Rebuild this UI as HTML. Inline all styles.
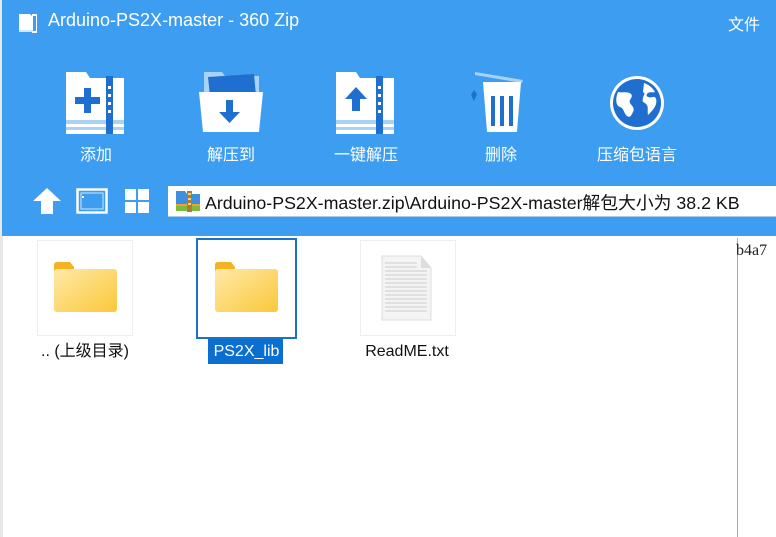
<!DOCTYPE html>
<html><head><meta charset="utf-8"><style>
*{margin:0;padding:0;box-sizing:border-box}
body{width:776px;height:537px;overflow:hidden;background:#fff;font-family:"Liberation Sans","Noto Sans CJK SC",sans-serif;position:relative}
.top{position:absolute;left:2px;top:0;width:774px;height:236px;background:#3d9df0}
.t{position:absolute;color:#fff}
.lbl{position:absolute;top:141px;font-size:16px;color:#fff;width:120px;text-align:center}
.ic{position:absolute;top:68px}
.tile{position:absolute;top:240px;width:96px;height:96px;border:1px solid #eee;background:#fff}
.fl{position:absolute;top:341px;font-size:16px;line-height:22px;color:#111;text-align:center;white-space:nowrap}
</style></head><body>
<div style="position:absolute;left:0;top:0;width:3px;height:537px;background:#e8e8e8"></div>
<div class="top"></div>
<svg class="t" style="left:18px;top:12px" width="22" height="22" viewBox="0 0 22 22"><path d="M1 2h11l3 3v15H1z" fill="#fff"/><rect x="14" y="2" width="5" height="19" fill="#fff"/><rect x="15" y="4" width="3" height="15" fill="#3d9df0"/><rect x="1" y="18" width="14" height="2" fill="#cfe6fb"/></svg>
<div class="t" style="left:48px;top:10px;font-size:18px">Arduino-PS2X-master - 360 Zip</div>
<div class="t" style="left:728px;top:11px;font-size:16px">文件</div>

<svg class="ic" style="left:65px" width="62" height="66" viewBox="0 0 62 66"><path d="M1 4h20l4 6h34v56H1z" fill="#fff"/><rect x="1" y="52" width="58" height="4" fill="#a9d2f7"/><rect x="1" y="59" width="58" height="3" fill="#a9d2f7"/><rect x="41" y="8" width="7" height="58" fill="#1f6fd0"/><g fill="#fff"><rect x="43" y="18" width="3" height="3"/><rect x="43" y="26" width="3" height="3"/><rect x="43" y="34" width="3" height="3"/><rect x="43" y="42" width="3" height="3"/></g><rect x="10" y="29" width="25" height="7" fill="#1f6fd0"/><rect x="19" y="20" width="7" height="25" fill="#1f6fd0"/></svg>
<svg class="ic" style="left:198px" width="66" height="66" viewBox="0 0 66 66"><path d="M6 4h18l3 4h34v20H6z" fill="#a9d2f7"/><path d="M10 9l46-3 2 22H12z" fill="#1f6fd0"/><path d="M1 24h64l-4 40H5z" fill="#fff"/><path d="M28 32h7v12h7l-10.5 11L21 44h7z" fill="#1f6fd0"/></svg>
<svg class="ic" style="left:335px" width="62" height="66" viewBox="0 0 62 66"><path d="M1 4h20l4 6h34v56H1z" fill="#fff"/><rect x="1" y="52" width="58" height="4" fill="#a9d2f7"/><rect x="1" y="59" width="58" height="3" fill="#a9d2f7"/><rect x="41" y="8" width="7" height="58" fill="#1f6fd0"/><g fill="#fff"><rect x="43" y="18" width="3" height="3"/><rect x="43" y="26" width="3" height="3"/><rect x="43" y="34" width="3" height="3"/><rect x="43" y="42" width="3" height="3"/></g><path d="M21 19l11 12h-7v12h-8V31h-7z" fill="#1f6fd0"/></svg>
<svg class="ic" style="left:467px" width="62" height="66" viewBox="0 0 62 66"><path d="M8 4l48 8-1 3-47-8z" fill="#a9d2f7"/><path d="M16 14h38l-4 50H20z" fill="#fff"/><rect x="24" y="28" width="4" height="30" fill="#1f6fd0"/><rect x="33" y="28" width="4" height="30" fill="#1f6fd0"/><rect x="42" y="28" width="4" height="30" fill="#1f6fd0"/><path d="M7 22l3 4-3 7-3-6z" fill="#1f6fd0"/></svg>
<svg class="ic" style="left:608px;top:74px" width="58" height="58" viewBox="0 0 58 58"><circle cx="29" cy="29" r="27" fill="#fff"/><circle cx="29" cy="29" r="24" fill="#1f6fd0"/><path d="M10 18c5 1 10-1 13 2s-3 6-1 9 5 5 3 9-3 6-6 4-3-8-7-9-5-8-2-15z M36 9c5 2 8 4 11 9-3 1-6-1-8 2s3 4 6 3 4 3 3 7-5 8-8 11c-1-5 1-8-2-11s-4-1-3-6 3-3 0-6z" fill="#fff"/></svg>

<div class="lbl" style="left:36px">添加</div>
<div class="lbl" style="left:171px">解压到</div>
<div class="lbl" style="left:306px">一键解压</div>
<div class="lbl" style="left:441px">删除</div>
<div class="lbl" style="left:577px">压缩包语言</div>

<svg style="position:absolute;left:33px;top:188px" width="28" height="26" viewBox="0 0 28 26"><path d="M14 0l14 13h-8v13h-12V13H0z" fill="#fff"/></svg>
<svg style="position:absolute;left:76px;top:188px" width="32" height="26" viewBox="0 0 32 26"><rect x="1.5" y="1.5" width="29" height="23" fill="none" stroke="#fff" stroke-width="2.5"/><rect x="5" y="5" width="22" height="16" fill="#3d9df0" stroke="#cfe6fb" stroke-width="1"/><rect x="6" y="8" width="2" height="2" fill="#fff"/></svg>
<svg style="position:absolute;left:125px;top:189px" width="24" height="24" viewBox="0 0 24 24"><rect x="0" y="0" width="11" height="11" fill="#fff"/><rect x="13" y="0" width="11" height="11" fill="#fff"/><rect x="0" y="13" width="11" height="11" fill="#fff"/><rect x="13" y="13" width="11" height="11" fill="#fff"/></svg>
<div style="position:absolute;left:168px;top:186px;width:608px;height:31px;background:#fff;border-bottom:1px solid #a9c9ea"></div>
<svg style="position:absolute;left:175px;top:188px" width="26" height="26" viewBox="0 0 26 26"><path d="M1 3h9l2 3h13v17H1z" fill="#3d8fe0"/><rect x="1" y="17" width="24" height="6" fill="#7dbb3c"/><rect x="1" y="16" width="24" height="2" fill="#f0a030"/><rect x="12" y="3" width="5" height="21" fill="#b07a30"/><rect x="13" y="5" width="3" height="2" fill="#f0d080"/><rect x="13" y="10" width="3" height="2" fill="#f0d080"/><rect x="13" y="15" width="3" height="2" fill="#f0d080"/></svg>
<div style="position:absolute;left:205px;top:189px;font-size:17.8px;color:#111;white-space:nowrap">Arduino-PS2X-master.zip\Arduino-PS2X-master解包大小为 38.2 KB</div>

<div style="position:absolute;left:737px;top:238px;width:1px;height:299px;background:#aaa"></div>
<div style="position:absolute;left:736px;top:242px;font-family:'Liberation Serif',serif;font-size:16px;color:#222">b4a7</div>

<div class="tile" style="left:37px"></div>
<div style="position:absolute;left:196px;top:238px;width:101px;height:101px;border:2px solid #1a73c8"></div>
<div class="tile" style="left:360px"></div>
<svg style="position:absolute;left:52px;top:261px" width="66" height="52" viewBox="0 0 66 52"><defs><linearGradient id="g" x1="0" y1="0" x2="1" y2="1"><stop offset="0" stop-color="#ffe9a8"/><stop offset="1" stop-color="#fbc83a"/></linearGradient></defs><path d="M2 4q0-3 3-3h13l4 5v8H2z" fill="#f5b323"/><rect x="2" y="8" width="63" height="43" rx="3" fill="url(#g)"/></svg>
<svg style="position:absolute;left:213px;top:261px" width="66" height="52" viewBox="0 0 66 52"><path d="M2 4q0-3 3-3h13l4 5v8H2z" fill="#f5b323"/><rect x="2" y="8" width="63" height="43" rx="3" fill="url(#g)"/></svg>
<svg style="position:absolute;left:380px;top:255px" width="52" height="66" viewBox="0 0 52 66"><path d="M2 1h39l10 12v52H2z" fill="#f4f4f4" stroke="#ddd"/><path d="M41 1v12h10" fill="#ddd"/><g stroke="#ccc" stroke-width="1"><path d="M5 8h32M5 12h32M5 16h42M5 20h42M5 24h42M5 28h42M5 32h42M5 36h42M5 40h42M5 44h42M5 48h42M5 52h42M5 56h42"/></g></svg>
<div class="fl" style="left:25px;width:120px;color:#111">.. (上级目录)</div>
<div style="position:absolute;left:208px;top:339px;width:75px;height:25px;background:#0a6fd0"></div>
<div class="fl" style="left:196px;width:101px;color:#fff">PS2X_lib</div>
<div class="fl" style="left:352px;width:110px">ReadME.txt</div>
</body></html>
